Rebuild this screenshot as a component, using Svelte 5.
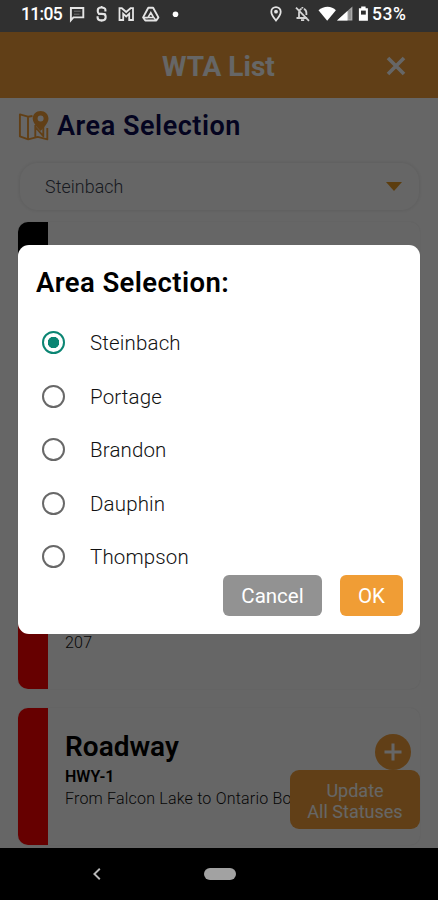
<script>
	const areas = ['Steinbach', 'Portage', 'Brandon', 'Dauphin', 'Thompson']

	const roads = [
		{ color: '#000', height: 296 },
		{ color: '#f00', height: 152, detail: '207' },
		{ color: '#f00', height: 137, title: 'Roadway', code: 'HWY-1', detail: 'From Falcon Lake to Ontario Border' }
	]

	let current = $state('Steinbach')
</script>

<div class="phone">
	<div class="status">
		<span class="time">11:05</span>
		<svg class="left-icons" width="120" height="20" viewBox="0 0 120 20" fill="none" stroke="#e4e4e4" stroke-width="1.9">
			<path d="M3.9 16.3V4h12.4v9.4H6.4z" />
			<path d="M7 7.2h6.5M7 10.2h5.5" stroke-width=".8" opacity=".45" />
			<path d="M38.4 7.4V5.8c0-3-7.6-3-7.6.2v1.6c0 2.4 2 2.3 4 2.3s3.8 0 3.8 2.3v1.6c0 3.5-8 3.5-8 0v-1.5" stroke-width="2.1" />
			<path d="M34.6 2v2M34.6 15.4v2.2M31 10h7.6" stroke-width="1.6" />
			<path d="M52.5 16V4.2h2.3L59.2 8l4.4-3.8H66V16h-3.8V9.8l-3 2.7-3-2.7V16z" stroke-width="1.8" />
			<path d="m81.3 3.8-5.2 9.6 2.2 3.1h11l2.1-3.1-5.3-9.6z" stroke-linejoin="round" stroke-width="1.9" />
			<path d="m83.8 8.6-2.8 4.9h5.6zM76.8 13.6h4M86.9 13.6l2 2.8" stroke-width="1.6" />
			<circle cx="108.5" cy="10.2" r="2.8" fill="#fff" stroke="none" />
		</svg>
		<svg class="right-icons" width="102" height="20" viewBox="0 0 102 20">
			<path d="M8 3.1c-2.7 0-4.7 2-4.7 4.6C3.3 11 8 16.5 8 16.5s4.7-5.5 4.7-8.8c0-2.6-2-4.6-4.7-4.6z" fill="none" stroke="#e4e4e4" stroke-width="1.8" />
			<circle cx="8" cy="7.7" r="1.9" fill="#e4e4e4" />
			<path d="M28.5 14h10.7M31 13.8V9c0-2 1-3.5 2.5-4.2M34.4 3v1.5M36 4.9c1.5.8 2.4 2.2 2.4 4.1v2M33 16.2h3.2M28 3.6l13 13.2" fill="none" stroke="#d4d4d4" stroke-width="1.8" />
			<path d="M50.5 6.3c5-4.8 13.3-4.8 17.4 0l-8.7 10.4z" fill="#fff" />
			<path d="M84.4 2.6v14H69z" fill="#aaa" />
			<path d="M79.5 7v9.6H69z" fill="#fff" />
			<path d="M80.5 5.8h2.4v9.4h-2.4z" fill="#777" opacity=".5" />
			<path d="M93.2 2.5h4.4v1.7h2.3v12.6h-9V4.2h2.3z" fill="#fff" />
			<path d="M93 6.6h4.8v4H93z" fill="#303030" />
		</svg>
		<span class="battery">53%</span>
	</div>

	<div class="screen">
		<header>
			<h1>WTA List</h1>
			<svg class="close" width="20" height="20" viewBox="0 0 20 20">
				<path d="m2 2 16 16M18 2 2 18" fill="none" stroke="#fff" stroke-width="3.6" />
			</svg>
		</header>

		<main>
			<h2>
				<svg width="32" height="32" viewBox="0 0 32 32" fill="none" stroke="#f39f38" stroke-width="1.9" stroke-linejoin="round">
					<path d="M14.5 6 10 6.7 1.9 4.4v22l8.3 3 9.6-2.5 9.5 2.5V18M10 6.7v22.2M17.3 15v11.8M17.3 17l8 9.2V17" />
					<path d="M22.6.9c-4.5 0-7.9 3.3-7.9 7.8 0 4.8 7.9 12.2 7.9 12.2s7.9-7.4 7.9-12.2c0-4.5-3.4-7.8-7.9-7.8zm0 4.6a3 3 0 1 1 0 6 3 3 0 0 1 0-6z" fill="#f39f38" fill-rule="evenodd" stroke="none" />
				</svg>
				Area Selection
			</h2>

			<div class="select">
				<span>{current}</span>
				<i class="arrow"></i>
			</div>

			{#each roads as road}
				<article style:height="{road.height}px">
					<div class="stripe" style:background={road.color}></div>
					<div class="info">
						{#if road.title}
							<h3>{road.title}</h3>
							<b>{road.code}</b>
						{/if}
						{#if road.detail}<p>{road.detail}</p>{/if}
					</div>
				</article>
			{/each}
		</main>

		<div class="plus">
			<svg width="36" height="36" viewBox="0 0 36 36">
				<path d="M18 9.5v17M9.5 18h17" fill="none" stroke="#fff" stroke-width="3" />
			</svg>
		</div>
		<button class="update">Update<br />All Statuses</button>

		<div class="overlay">
			<div class="dialog" role="dialog" aria-label="Area Selection">
				<h2>Area Selection:</h2>
				{#each areas as area}
					<label>
						<input type="radio" name="area" value={area} bind:group={current} />
						<span>{area}</span>
					</label>
				{/each}
				<div class="actions">
					<button class="cancel">Cancel</button>
					<button class="ok">OK</button>
				</div>
			</div>
		</div>
	</div>

	<nav>
		<svg width="10" height="14" viewBox="0 0 10 14">
			<path d="M7.8 1.8 2.4 7l5.4 5.2" fill="none" stroke="#b8b8b8" stroke-width="1.9" />
		</svg>
		<div class="home"></div>
	</nav>
</div>

<style>
	:global(body) {
		margin: 0;
		background: #000;
	}

	.phone {
		box-sizing: border-box;
		width: 438px;
		height: 900px;
		display: flex;
		flex-direction: column;
		overflow: hidden;
		font-family: Roboto, sans-serif;
		background: #000;
	}

		.phone * {
			box-sizing: border-box;
		}

	h1, h2, h3, p {
		margin: 0;
	}

	button {
		border: 0;
		padding: 0;
		font-family: inherit;
		color: #fff;
	}

	.status {
		flex: 0 0 32px;
		display: flex;
		align-items: center;
		padding: 0 30px 4px 21px;
		background: #303030;
		color: #fff;
		font-size: 17.5px;
		font-weight: 500;
		line-height: 28px;
	}

	.time {
		width: 46px;
		letter-spacing: -0.7px;
		white-space: nowrap;
	}

	.right-icons {
		margin-left: 81px;
	}

	.battery {
		margin-left: 2px;
		letter-spacing: 0.5px;
	}

	.screen {
		flex: 1;
		position: relative;
		min-height: 0;
		overflow: hidden;
		background: #fff;
	}

	header {
		height: 66px;
		display: flex;
		align-items: center;
		justify-content: space-between;
		padding: 2px 32px 0 162px;
		background: #f29f3a;
		color: #fff;
	}

	h1 {
		font-size: 28px;
		font-weight: 700;
	}

	main {
		padding: 10px 18px 0;
	}

	main h2 {
		height: 36px;
		display: flex;
		align-items: center;
		gap: 7px;
		color: #0a0a50;
		font-size: 27px;
		font-weight: 600;
		letter-spacing: 0.55px;
		white-space: nowrap;
	}

	.select {
		height: 47px;
		margin: 19px 1px 12px 2px;
		display: flex;
		align-items: center;
		justify-content: space-between;
		padding: 0 17px 0 25px;
		border-radius: 18px;
		box-shadow: 0 0 4px rgba(0, 0, 0, 0.12);
		color: #3a4250;
		font-size: 17.8px;
		font-weight: 300;
		letter-spacing: 0.1px;
	}

	.arrow {
		border: 8px solid transparent;
		border-top: 9px solid #e59a25;
		border-bottom: 0;
	}

	article {
		display: flex;
		margin-bottom: 19px;
		border-radius: 10px;
		overflow: hidden;
		box-shadow: 0 0 2px rgba(0, 0, 0, 0.1);
	}

	.stripe {
		flex: 0 0 30px;
	}

	.info {
		flex: 1;
		min-width: 0;
		display: flex;
		flex-direction: column;
		justify-content: flex-end;
		padding: 0 17px 35px 17px;
		color: #000;
		white-space: nowrap;
	}

	h3 {
		font-size: 28px;
		font-weight: 600;
		line-height: 37px;
	}

	.info b {
		font-size: 16px;
		font-weight: 600;
		line-height: 23px;
	}

	.info p {
		font-size: 16px;
		font-weight: 300;
		letter-spacing: 0.2px;
		line-height: 22px;
		color: #111;
	}

	.plus {
		position: absolute;
		right: 27px;
		bottom: 78px;
		height: 36px;
		border-radius: 50%;
		background: #f29f3a;
	}

	.update {
		position: absolute;
		right: 18px;
		bottom: 19px;
		width: 130px;
		height: 59px;
		padding-top: 2px;
		border-radius: 9px;
		background: #f29f3a;
		font-size: 18px;
		line-height: 21px;
	}

	.overlay {
		position: absolute;
		inset: 0;
		display: flex;
		align-items: center;
		justify-content: center;
		background: rgba(0, 0, 0, 0.6);
	}

	.dialog {
		width: 402px;
		height: 389px;
		margin-bottom: 1px;
		padding: 20px 17px 18px 18px;
		border-radius: 11px;
		background: #fff;
	}

		.dialog h2 {
			margin-bottom: 15px;
			font-size: 27.5px;
			font-weight: 600;
			letter-spacing: 0.4px;
			line-height: 36px;
		}

	label {
		display: flex;
		align-items: center;
		gap: 25px;
		height: 53.5px;
		padding-left: 6px;
		font-size: 20.5px;
		color: #111;
	}

		label span {
			padding-top: 1px;
			font-weight: 300;
			letter-spacing: 0.15px;
		}

	input {
		appearance: none;
		flex: none;
		width: 23px;
		height: 23px;
		margin: 0;
		border: 2px solid #686868;
		border-radius: 50%;
	}

		input:checked {
			border: 2px solid #0b8573;
			background: radial-gradient(circle, #0b8573 5.5px, transparent 6px);
		}

	.actions {
		display: flex;
		justify-content: flex-end;
		gap: 18px;
		margin-top: -8.5px;
	}

		.actions button {
			height: 41px;
			padding-top: 1px;
			border-radius: 6px;
			font-size: 20.5px;
		}

		.actions .cancel {
			width: 99px;
			background: #929292;
		}

		.actions .ok {
			width: 63px;
			background: #f09d35;
		}

	nav {
		flex: 0 0 52px;
		display: flex;
		align-items: center;
		padding-left: 92px;
		background: #000;
	}

	.home {
		width: 32px;
		height: 12px;
		margin-left: 102px;
		border-radius: 6px;
		background: #a2a2a2;
	}
</style>
